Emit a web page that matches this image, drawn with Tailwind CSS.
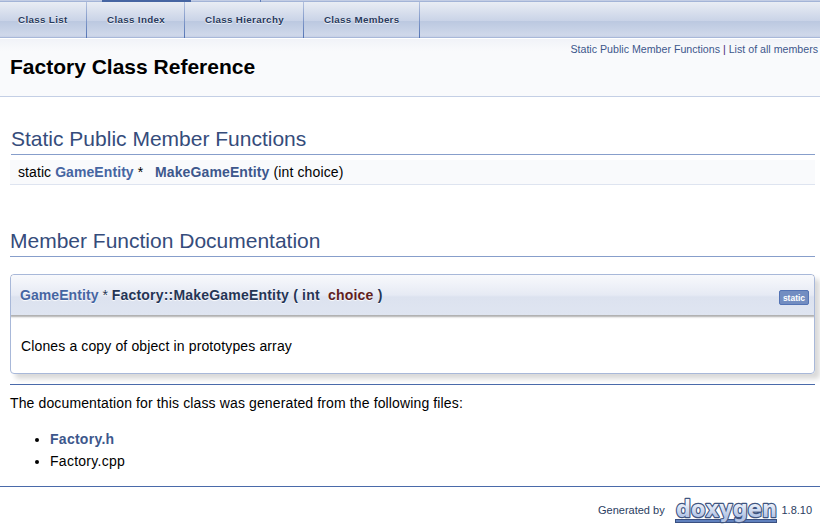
<!DOCTYPE html>
<html lang="en">
<head>
<meta charset="utf-8">
<title>Factory Class Reference</title>
<script src="https://cdn.jsdelivr.net/npm/@tailwindcss/browser@4"></script>
</head>
<body class="h-[526px] w-[820px] overflow-hidden bg-white font-['Liberation_Sans',Arial,sans-serif] text-[14px] leading-[22px] text-black">
<div class="flex h-[2px] border-b border-[#a3b4d7] bg-[#c3cde4]">
  <div class="-mb-px ml-[102px] h-[2px] w-[89px] bg-[#4665a2]"></div>
  <div class="-mb-px ml-[69px] h-[2px] w-px bg-[#5f7eb8]"></div>
</div>
<nav class="flex h-[36px] border-b border-[#a8b8d9] bg-linear-[180deg,#e9edf4_0,#c9d3e7_19px,#bbc8e0_19px,#cfd8ea_33px,#c6d0e5_35px] text-[9.75px] leading-[35px] font-bold text-[#283a5d] [text-shadow:0_1px_1px_rgba(255,255,255,0.9)]">
  <a class="w-[86px] pl-[18px] tracking-[0.35px]">Class List</a>
  <i class="h-[36px] w-px bg-linear-to-b from-[#b3c1de] to-[#5373b4]"></i>
  <a class="w-[97px] pl-[20px] tracking-[0.35px]">Class Index</a>
  <i class="h-[36px] w-px bg-linear-to-b from-[#b3c1de] to-[#5373b4]"></i>
  <a class="w-[118px] pl-[20px] tracking-[0.35px]">Class Hierarchy</a>
  <i class="h-[36px] w-px bg-linear-to-b from-[#b3c1de] to-[#5373b4]"></i>
  <a class="w-[115px] pl-[20px] tracking-[0.3px]">Class Members</a>
  <i class="h-[36px] w-px bg-linear-to-b from-[#b3c1de] to-[#5373b4]"></i>
</nav>
<header class="mt-px flex h-[58px] justify-between border-b border-[#c4cfe5] bg-linear-[180deg,#f1f3f8_0,#f9fafc_12px]">
  <h1 class="pt-[15px] pl-[10px] text-[21px] leading-[26px] font-bold whitespace-nowrap">Factory Class Reference</h1>
  <div class="pt-[3px] pr-[2px] text-[10.65px] leading-[15px] whitespace-nowrap text-[#3d578c]">Static Public Member Functions <span class="text-[#4b2a75]">|</span> List of all members</div>
</header>
<main class="pr-[5px] pl-[10px]">
  <h2 class="ml-px flex h-[58px] items-end border-b border-[#879ecb] pb-[2px] text-[21px] leading-[26px] whitespace-nowrap text-[#354c7b]">Static Public Member Functions</h2>
  <div class="mt-[5px] flex h-[25px] border-b border-[#dee4f0] bg-[#f9fafc] pl-[8px] leading-[25px] tracking-[0.12px] whitespace-pre"><span class="w-[137px] tracking-[0.08px]">static <b class="text-[#4665a2]">GameEntity</b> *</span><span><b class="text-[#3d578c]">MakeGameEntity</b> (int choice)</span></div>
  <h2 class="flex h-[72px] items-end border-b border-[#879ecb] pb-[2px] text-[21px] leading-[26px] whitespace-nowrap text-[#354c7b]">Member Function Documentation</h2>
  <section class="mt-[17px] h-[100px] rounded-[4px] border border-[#a8b8d9] shadow-[5px_5px_5px_rgba(0,0,0,0.15)]">
    <div class="flex h-[40px] items-center justify-between rounded-t-[3px] bg-linear-[180deg,#f8f9fc_0,#e6eaf4_20px,#dce2ef_22px,#dfe5f1_100%] pr-[5px] pl-[9px] font-bold text-[#253555] shadow-[0_1px_2px_1px_rgba(0,0,0,0.32)] [clip-path:inset(0_0_-6px_0)] [text-shadow:0_1px_1px_rgba(255,255,255,0.9)]">
      <div class="whitespace-pre"><span class="tracking-[0.07px] text-[#4665a2]">GameEntity</span><span class="font-normal"> * </span><span class="tracking-[0.2px]">Factory::MakeGameEntity ( int  <span class="text-[#602020]">choice</span> )</span></div>
      <span class="mt-[5px] h-[15px] w-[30px] rounded-[2px] border border-[#5373b4] bg-[#728dc1] text-center text-[8.5px] leading-[14px] text-white [text-shadow:none]">static</span>
    </div>
    <p class="pt-[20px] pl-[10px] tracking-[0.13px]">Clones a copy of object in prototypes array</p>
  </section>
  <hr class="mt-[10px] border-[#4a6aaa]">
  <p class="mt-[7px] tracking-[0.13px]">The documentation for this class was generated from the following files:</p>
  <ul class="mt-[14px] list-disc pl-[40px] tracking-[0.27px]">
    <li><b class="text-[#3d578c]">Factory.h</b></li>
    <li>Factory.cpp</li>
  </ul>
</main>
<footer class="mt-[14px] flex border-t border-[#4a6aaa] pl-[598px] text-[11px] text-[#2a3d61]">
  <span class="w-[75px] pt-[12px] whitespace-nowrap">Generated by</span>
  <svg class="mt-[8px] h-[31px] w-[107px] shrink-0 overflow-visible" viewBox="0 0 107 31">
    <defs><linearGradient id="g" x1="0" y1="0" x2="0" y2="1"><stop offset="0.25" stop-color="#f4f7fc"/><stop offset="0.8" stop-color="#b4c5e6"/></linearGradient></defs>
    <rect x="2.5" y="24.5" width="101" height="3" fill="#5f80bd" stroke="#3a5080"/>
    <text x="3" y="21.5" textLength="101" lengthAdjust="spacingAndGlyphs" font-family="DejaVu Sans" font-weight="bold" font-size="22.5" fill="url(#g)" stroke="#405580" stroke-width="2.4" stroke-linejoin="round" paint-order="stroke">doxygen</text>
  </svg>
  <span class="pt-[12px] pl-[1.5px]">1.8.10</span>
</footer>
</body>
</html>
